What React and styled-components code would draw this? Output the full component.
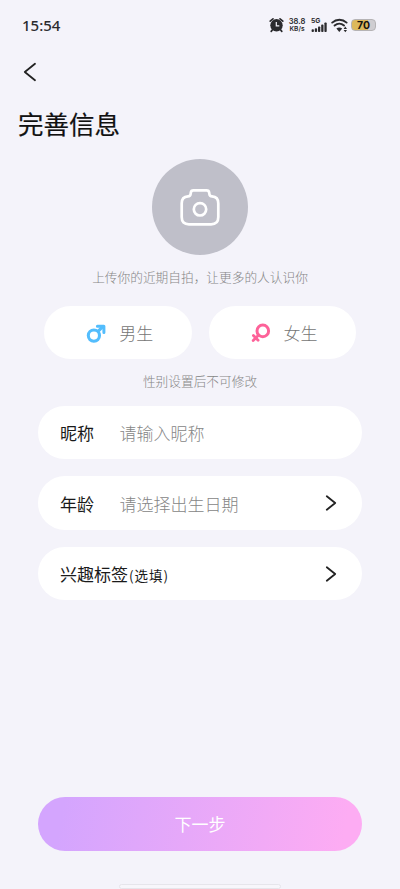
import React from 'react'
import styled, { createGlobalStyle, ThemeProvider } from 'styled-components'

const theme = {
  colors: {
    background: '#f4f3fa',
    surface: '#ffffff',
    text: '#1a1a1a',
    muted: '#868686',
    avatar: '#bfbfc9',
    male: '#53bdfd',
    female: '#fd6299',
  },
  fonts: {
    main: '"Noto Sans CJK SC", sans-serif',
    status: '"Noto Sans", sans-serif',
    tiny: 'Inter, sans-serif',
  },
}

const GlobalStyle = createGlobalStyle`
  * {
    box-sizing: border-box;
  }
  body {
    margin: 0;
    background: ${theme.colors.background};
  }
  button, input {
    border: 0;
    padding: 0;
    background: none;
    font: inherit;
    color: inherit;
  }
  svg {
    display: block;
    flex: none;
  }
`

const Screen = styled.div`
  width: 100%;
  height: 889px;
  display: flex;
  flex-direction: column;
  overflow: hidden;
  background: ${({ theme }) => theme.colors.background};
  color: ${({ theme }) => theme.colors.text};
  font-family: ${({ theme }) => theme.fonts.main};
`

const StatusBar = styled.div`
  height: 50px;
  padding: 0 24px 0 22px;
  display: flex;
  align-items: center;
  justify-content: space-between;
  font-family: ${({ theme }) => theme.fonts.status};
  color: #2b2b2e;
`

const Time = styled.span`
  font-size: 15px;
  font-weight: 500;
  line-height: 20px;
`

const StatusIcons = styled.div`
  display: flex;
  align-items: center;
`

const Speed = styled.div`
  width: 18px;
  margin: 0 5px 0 4px;
  display: flex;
  flex-direction: column;
  align-items: center;
  font-family: ${({ theme }) => theme.fonts.tiny};
  font-weight: 600;
  white-space: nowrap;
`

const SpeedValue = styled.span`
  font-size: 7.6px;
  line-height: 8px;
`

const SpeedUnit = styled.span`
  font-size: 6.6px;
  line-height: 7px;
`

const Signal = styled.div`
  width: 17px;
  height: 14px;
  margin-right: 3px;
  display: flex;
  flex-direction: column;
  font-family: ${({ theme }) => theme.fonts.tiny};
  font-size: 6.8px;
  font-weight: 700;
  line-height: 6px;

  svg {
    margin-top: -2px;
  }
`

const Battery = styled.div`
  width: 25px;
  height: 12px;
  margin-left: 3px;
  border-radius: 4px;
  border: 1px solid #b5b3b5;
  background: linear-gradient(90deg, #dcb95c 0 70%, #cfcdd1 70%);
  color: #17150f;
  font-family: ${({ theme }) => theme.fonts.tiny};
  font-size: 10.5px;
  font-weight: 700;
  line-height: 12px;
  text-align: center;
`

const BackButton = styled.button`
  width: 60px;
  height: 44px;
  padding-left: 22px;
  display: flex;
  align-items: center;
`

const Title = styled.h1`
  margin: 10px 0 0 18px;
  font-size: 25.5px;
  font-weight: 400;
  line-height: 38px;
  color: #111111;
  -webkit-text-stroke: 0.2px #111111;
`

const Avatar = styled.button`
  width: 96px;
  height: 96px;
  margin: 17px auto 0;
  display: flex;
  align-items: center;
  justify-content: center;
  border-radius: 50%;
  background: ${({ theme }) => theme.colors.avatar};
`

const Hint = styled.p`
  margin: ${({ $top }) => $top}px 0 0;
  font-size: 12.7px;
  font-weight: 300;
  line-height: 20px;
  text-align: center;
  color: ${({ theme }) => theme.colors.muted};
`

const GenderRow = styled.div`
  margin: 19.4px 44.3px 0;
  display: flex;
  gap: 17px;
`

const GenderButton = styled.button`
  flex: 1;
  height: 53px;
  padding-left: 42px;
  display: flex;
  align-items: center;
  gap: 13px;
  border-radius: 27px;
  background: ${({ theme }) => theme.colors.surface};
  color: #757575;
  font-size: 17px;
  font-weight: 300;
`

const Form = styled.div`
  margin: 15px 38.3px 0;
  display: flex;
  flex-direction: column;
  gap: 17.3px;
`

const Field = styled.label`
  height: 53.2px;
  padding: 0 25px 0 21.7px;
  display: flex;
  align-items: center;
  border-radius: 27px;
  background: ${({ theme }) => theme.colors.surface};
  font-size: 17px;
`

const Label = styled.span`
  margin-right: 25.5px;
`

const WideLabel = styled.span`
  flex: 1;
`

const Optional = styled.small`
  margin-left: 1px;
  font-size: 13.5px;
  letter-spacing: 1px;
`

const Input = styled.input`
  flex: 1;
  min-width: 0;
  outline: none;
  font-weight: 300;

  &::placeholder {
    color: ${({ theme }) => theme.colors.muted};
    opacity: 1;
  }
`

const Value = styled.span`
  flex: 1;
  font-weight: 300;
  color: ${({ theme }) => theme.colors.muted};
`

const NextButton = styled.button`
  height: 53.5px;
  margin: auto 38.3px 0;
  flex: none;
  border-radius: 27px;
  background: linear-gradient(100deg, #d4a5fe 8%, #fdacf3 94%);
  color: #ffffff;
  font-size: 17px;
`

const HomeIndicator = styled.div`
  width: 162px;
  height: 5px;
  margin: 33.5px auto 0;
  flex: none;
  border: 1px solid #e6e5eb;
  border-radius: 3px;
  background: #f7f6fb;
`

function AlarmIcon() {
  return (
    <svg width="15" height="16" viewBox="0 0 15 16" fill="none">
      <circle cx="7.5" cy="8.3" r="6.2" fill="currentColor" />
      <path
        d="M1.2 4.2 4 1.8M13.8 4.2 11 1.8M3.3 13l-1.1 1.4M11.7 13l1.1 1.4"
        stroke="currentColor"
        strokeWidth="1.7"
        strokeLinecap="round"
      />
      <path d="M7.3 5v3.8h3" stroke="#f4f3fa" strokeWidth="1.2" />
    </svg>
  )
}

function SignalIcon() {
  return (
    <svg width="17" height="10" viewBox="0 0 17 10" fill="currentColor">
      <rect x="0.6" y="7.3" width="2.3" height="2.7" rx="0.8" />
      <rect x="3.8" y="6.3" width="2.3" height="3.7" rx="0.8" />
      <rect x="7" y="4.5" width="2.3" height="5.5" rx="0.8" />
      <rect x="10.2" y="2.6" width="2.3" height="7.4" rx="0.8" />
      <rect x="13.4" y="0.5" width="2.3" height="9.5" rx="0.8" />
    </svg>
  )
}

function WifiIcon() {
  return (
    <svg width="17" height="15" viewBox="0 0 17 15" fill="none">
      <path
        d="M1.2 4.6c4.2-3.9 10.2-3.9 14.4 0M3.6 7.5c2.8-2.5 6.6-2.5 9.4 0"
        stroke="currentColor"
        strokeWidth="1.9"
        strokeLinecap="round"
      />
      <path d="M5.4 10.6c1.7-1.6 4.1-1.6 5.8 0l-2.9 3.4z" fill="currentColor" />
      <path d="m14.3 8.6 1.7 2.3h-3.4zM14.3 14.2l1.7-2.3h-3.4z" fill="currentColor" />
    </svg>
  )
}

function ChevronIcon({ back }) {
  return (
    <svg
      width={back ? 16 : 12}
      height={back ? 20 : 18}
      viewBox={back ? '0 0 16 20' : '0 0 12 18'}
      fill="none"
      stroke="#222222"
      strokeWidth="1.8"
      strokeLinecap="round"
      strokeLinejoin="round"
    >
      <path d={back ? 'M13 1.8 2.8 10 13 18.2' : 'M1.8 2.2 10.2 9l-8.4 6.8'} />
    </svg>
  )
}

function CameraIcon() {
  return (
    <svg
      width="42"
      height="38"
      viewBox="0 0 42 38"
      fill="none"
      stroke="#ffffff"
      strokeWidth="2.7"
      strokeLinejoin="round"
    >
      <path d="M14.5 2.4h13c1.7 0 2.5.8 2.7 2.3l.2 1.4c.2 1.5 1 2.2 2.6 2.3 4 .3 6.3 3 6.3 7V29c0 5-2.5 7.3-7.2 7.3H9.9c-4.7 0-7.2-2.3-7.2-7.3V15.4c0-4 2.3-6.7 6.3-7 1.6-.1 2.4-.8 2.6-2.3l.2-1.4c.2-1.5 1-2.3 2.7-2.3z" />
      <circle cx="21" cy="21.3" r="6.2" />
    </svg>
  )
}

function MaleIcon() {
  return (
    <svg width="20" height="20" viewBox="0 0 20 20" fill="none" stroke={theme.colors.male}>
      <circle cx="7.9" cy="12.6" r="5.6" strokeWidth="3.1" />
      <path d="m11.8 8.7 5-5" strokeWidth="3.1" />
      <path
        d="M11.4 3.2h6.5v6.4"
        strokeWidth="3"
        strokeLinecap="round"
        strokeLinejoin="round"
      />
    </svg>
  )
}

function FemaleIcon() {
  return (
    <svg width="20" height="20" viewBox="0 0 20 20" fill="none" stroke={theme.colors.female}>
      <circle cx="11.8" cy="7.9" r="5.8" strokeWidth="3" />
      <path
        d="m7.7 12-5.5 5.4M2.4 12.5l4.7 4.7"
        strokeWidth="2.8"
        strokeLinecap="round"
      />
    </svg>
  )
}

function App() {
  return (
    <ThemeProvider theme={theme}>
      <GlobalStyle />
      <Screen>
        <StatusBar>
          <Time>15:54</Time>
          <StatusIcons>
            <AlarmIcon />
            <Speed>
              <SpeedValue>38.8</SpeedValue>
              <SpeedUnit>KB/s</SpeedUnit>
            </Speed>
            <Signal>
              5G
              <SignalIcon />
            </Signal>
            <WifiIcon />
            <Battery>70</Battery>
          </StatusIcons>
        </StatusBar>
        <BackButton>
          <ChevronIcon back />
        </BackButton>
        <Title>完善信息</Title>
        <Avatar>
          <CameraIcon />
        </Avatar>
        <Hint $top={12}>上传你的近期自拍，让更多的人认识你</Hint>
        <GenderRow>
          <GenderButton>
            <MaleIcon />
            男生
          </GenderButton>
          <GenderButton>
            <FemaleIcon />
            女生
          </GenderButton>
        </GenderRow>
        <Hint $top={11.6}>性别设置后不可修改</Hint>
        <Form>
          <Field>
            <Label>昵称</Label>
            <Input placeholder="请输入昵称" />
          </Field>
          <Field>
            <Label>年龄</Label>
            <Value>请选择出生日期</Value>
            <ChevronIcon />
          </Field>
          <Field>
            <WideLabel>
              兴趣标签<Optional>(选填)</Optional>
            </WideLabel>
            <ChevronIcon />
          </Field>
        </Form>
        <NextButton>下一步</NextButton>
        <HomeIndicator />
      </Screen>
    </ThemeProvider>
  )
}

export default App
